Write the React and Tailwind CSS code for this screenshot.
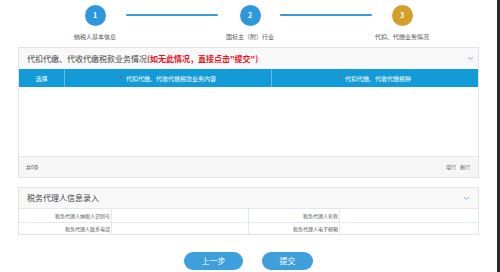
export default function App() {
  const font = { fontFamily: '"Noto Sans CJK SC", "Noto Sans", sans-serif' };

  const steps = [
    { n: 1, label: "纳税人基本信息", color: "bg-[#2f98dd]" },
    { n: 2, label: "国标主（附）行业", color: "bg-[#2f98dd]" },
    { n: 3, label: "代扣、代缴业务情况", color: "bg-[#d29f29]" },
  ];

  return (
    <div className="relative h-[272px] w-[500px] overflow-hidden bg-white text-[#555]" style={font}>
      {/* right edge strip */}
      <div className="absolute right-0 top-0 h-full w-[3px] bg-[#2a2a2a]" />

      {/* Steps */}
      <div className="flex h-[47px] pl-[65px]">
        <Step {...steps[0]} />
        <div className="mt-[14px] h-[2px] w-[92px] ml-[1px] mr-[2px] rounded-full bg-[#3a9ad9]" />
        <Step {...steps[1]} />
        <div className="mt-[14px] h-[2px] w-[92px] mr-[0px] rounded-full bg-[#3a9ad9]" />
        <Step {...steps[2]} />
      </div>

      {/* Panel 1 */}
      <section className="ml-[18px] w-[461px] border border-[#e3e3e3]">
        <div className="flex h-[21px] items-center justify-between bg-[#f8f8f8] pl-[8px] pr-[4px]">
          <p className="text-[8px] leading-none text-[#444]">
            代扣代缴、代收代缴税款业务情况
            <span className="font-bold text-[#e6141e]">(如无此情况，直接点击"提交")</span>
          </p>
          <Chevron />
        </div>
        <div className="grid h-[18px] grid-cols-[46px_207px_1fr] bg-[#129bd7] text-[6px] text-white">
          <div className="flex items-center justify-center border-r border-[#5fbde6]">选择</div>
          <div className="flex items-center justify-center border-r border-[#5fbde6]">
            <span className="mr-[3px] text-[#e8242a]">*</span>代扣代缴、代收代缴税款业务内容
          </div>
          <div className="flex items-center justify-center">
            <span className="mr-[3px] text-[#e8242a]">*</span>代扣代缴、代收代缴税种
          </div>
        </div>
        <div className="h-[69px] bg-white" />
        <div className="flex h-[21px] items-center justify-between border-t border-[#e6e6e6] bg-[#f6f6f6] pl-[7px] pr-[8px] text-[5px] text-[#666]">
          <span>共0条</span>
          <span className="flex gap-[4px]">
            <span>增行</span>
            <span>删行</span>
          </span>
        </div>
      </section>

      {/* Panel 2 */}
      <section className="ml-[18px] mt-[9px] w-[461px] border border-[#e3e3e3]">
        <div className="flex h-[20px] items-center justify-between bg-[#f8f8f8] pl-[8px] pr-[8px]">
          <p className="text-[8px] leading-none text-[#444]">税务代理人信息录入</p>
          <Chevron />
        </div>
        <div className="grid grid-cols-[93px_137px_91px_1fr] text-[5px] text-[#555]">
          <Cell label="税务代理人纳税人识别号" h="h-[14px]" />
          <div className="h-[14px] border-t border-r border-[#e2e9ee]" />
          <Cell label="税务代理人名称" h="h-[14px]" />
          <div className="h-[14px] border-t border-[#e2e9ee]" />
          <Cell label="税务代理人联系电话" h="h-[12px]" />
          <div className="h-[12px] border-t border-r border-[#e2e9ee]" />
          <Cell label="税务代理人电子邮箱" h="h-[12px]" />
          <div className="h-[12px] border-t border-[#e2e9ee]" />
        </div>
      </section>

      {/* Buttons */}
      <div className="mt-[17px] flex justify-center gap-[19px] pr-[3px]">
        <button className="h-[18px] w-[59px] rounded-full bg-[#3d9fdc] text-[8px] text-white">上一步</button>
        <button className="h-[18px] w-[51px] rounded-full bg-[#3d9fdc] text-[8px] text-white">提交</button>
      </div>
    </div>
  );
}

function Step({ n, label, color }) {
  return (
    <div className="flex w-[60px] flex-col items-center">
      <div className={`mt-[5px] flex h-[21px] w-[21px] items-center justify-center rounded-full ${color} text-[7px] font-bold text-white`}>
        {n}
      </div>
      <span className="mt-[6px] whitespace-nowrap text-[6px] text-[#555]">{label}</span>
    </div>
  );
}

function Cell({ label, h }) {
  return (
    <div className={`flex ${h} items-center justify-end border-t border-r border-[#e2e9ee] pr-[1px] whitespace-nowrap`}>
      {label}
    </div>
  );
}

function Chevron() {
  return (
    <svg width="7" height="5" viewBox="0 0 7 5" className="text-[#6aaee0]">
      <path d="M1 1 L3.5 3.5 L6 1" fill="none" stroke="currentColor" strokeWidth="0.9" />
    </svg>
  );
}
